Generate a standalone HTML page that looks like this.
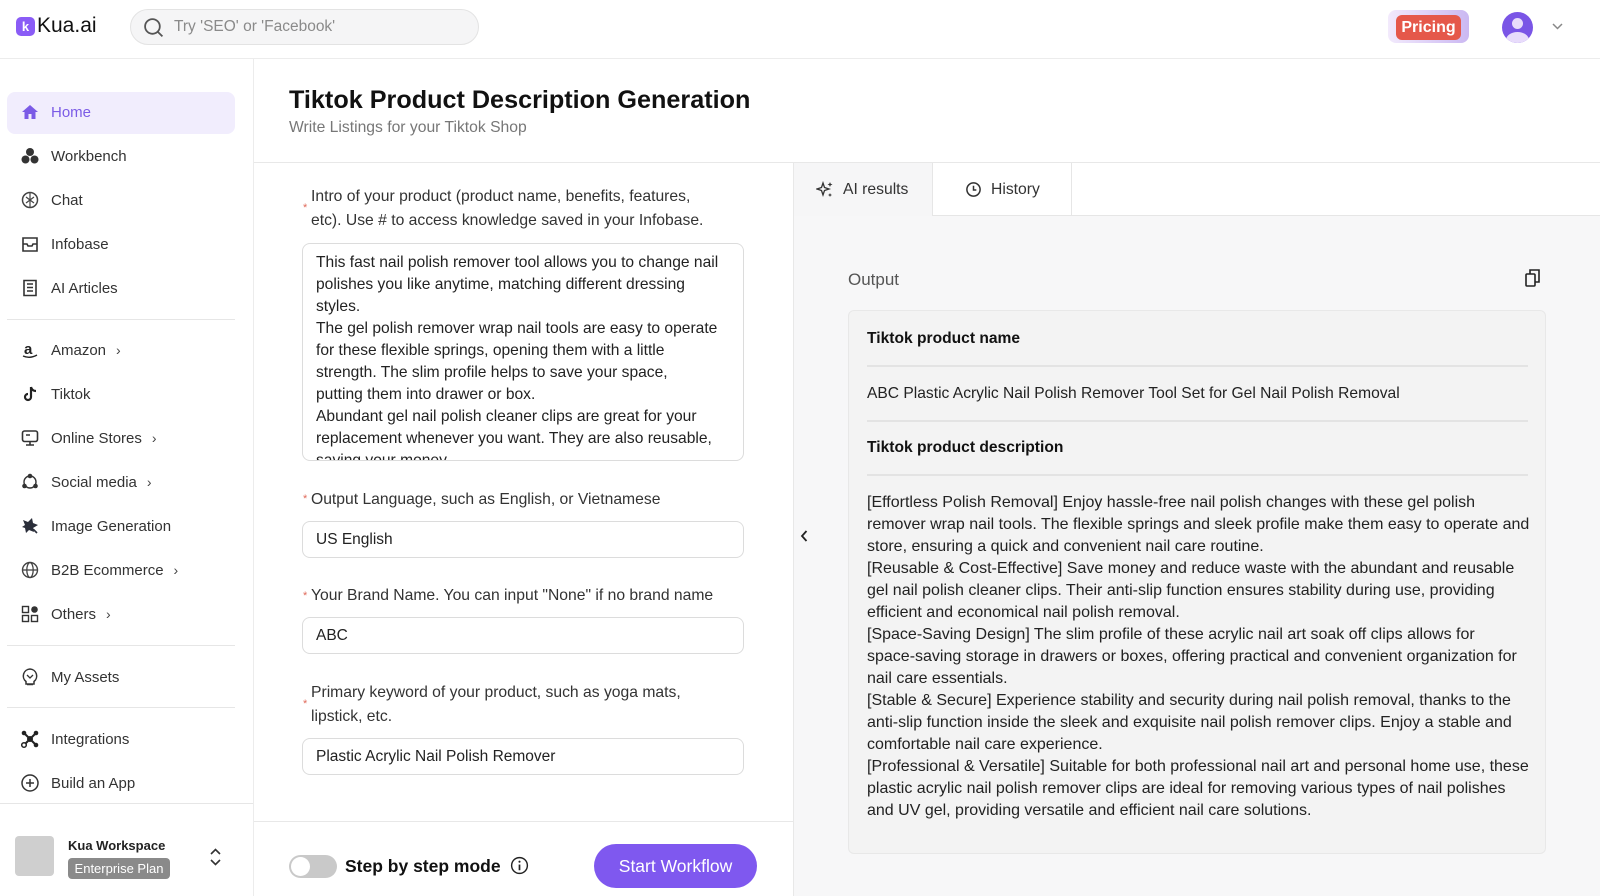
<!DOCTYPE html>
<html><head><meta charset="utf-8"><style>
*{box-sizing:border-box;margin:0;padding:0}
body{width:1600px;height:896px;overflow:hidden;font-family:"Liberation Sans",sans-serif;color:#1f1f1f;background:#fff;position:relative}
.a{position:absolute}
.nav{position:absolute;left:20px;height:22px;display:flex;align-items:center;font-size:15px;color:#333}
.nav svg{width:20px;height:20px;margin-right:11px}
.nav .ch{margin-left:10px;font-size:14px;color:#444}
.hr{position:absolute;left:7px;width:228px;height:1px;background:#e6e6e6}
.lbl{position:absolute;left:311px;font-size:15.7px;color:#333;line-height:24px;white-space:nowrap}
.star{position:absolute;color:#e06a5a;font-size:11px}
.inp{position:absolute;left:302px;width:442px;border:1px solid #dcdcdc;border-radius:8px;font-size:15.5px;color:#222;padding-left:13px;display:flex;align-items:center}
.out{font-size:15.6px;line-height:22px;color:#222;white-space:nowrap}
</style></head><body>
<!-- header -->
<div class="a" style="left:0;top:0;width:1600px;height:59px;border-bottom:1px solid #ececec"></div>
<div class="a" style="left:16px;top:17px;width:19px;height:19px;border-radius:5px;background:#8a5cf6;color:#fff;font-size:13px;font-weight:bold;text-align:center;line-height:19px">k</div>
<div class="a" style="left:37px;top:14px;font-size:21px;color:#111">Kua.ai</div>
<div class="a" style="left:130px;top:9px;width:349px;height:36px;border-radius:18px;background:#f5f5f6;border:1px solid #e3e3e3"></div>
<svg class="a" style="left:143px;top:17px" width="21" height="21" viewBox="0 0 20 20"><circle cx="9" cy="9" r="7" fill="none" stroke="#555" stroke-width="1.7"/><path d="M14 14l4.5 4.5" stroke="#555" stroke-width="1.7"/></svg>
<div class="a" style="left:174px;top:18px;font-size:15.5px;color:#8a8a8a">Try 'SEO' or 'Facebook'</div>
<div class="a" style="left:1388px;top:10px;width:81px;height:33px;border-radius:8px;background:linear-gradient(90deg,#f2eafc,#cbb8f2)"></div>
<div class="a" style="left:1396px;top:15px;width:65px;height:25px;border-radius:6px;background:#e5584a;color:#fff;font-size:16px;font-weight:bold;text-align:center;line-height:25px">Pricing</div>
<div class="a" style="left:1502px;top:12px;width:31px;height:31px;border-radius:50%;background:#7a55e6;overflow:hidden"><div class="a" style="left:10px;top:6px;width:11px;height:11px;border-radius:50%;background:#e8dcfb"></div><div class="a" style="left:4px;top:20px;width:23px;height:16px;border-radius:50%;background:#e8dcfb"></div></div>
<svg class="a" style="left:1551px;top:22px" width="13" height="9" viewBox="0 0 13 9"><path d="M2 2l4.5 4.5L11 2" fill="none" stroke="#888" stroke-width="1.5"/></svg>

<!-- sidebar -->
<div class="a" style="left:253px;top:59px;width:1px;height:837px;background:#ececec"></div>
<div class="a" style="left:7px;top:92px;width:228px;height:42px;border-radius:8px;background:#f1edfd"></div>
<div class="nav" style="top:101px;color:#7b5be6"><svg viewBox="0 0 20 20"><path d="M2 10L10 3l8 7h-2.5v7h-4v-5h-3v5h-4v-7z" fill="#7b5be6"/></svg>Home</div>
<div class="nav" style="top:145px"><svg viewBox="0 0 20 20"><circle cx="10" cy="6" r="4" fill="#333"/><circle cx="5.5" cy="13.5" r="4" fill="#333"/><circle cx="14.5" cy="13.5" r="4" fill="#333"/></svg>Workbench</div>
<div class="nav" style="top:189px"><svg viewBox="0 0 20 20"><circle cx="10" cy="10" r="7.5" fill="none" stroke="#444" stroke-width="1.5"/><path d="M6 7l8 6M6 13l8-6M10 3v14" stroke="#444" stroke-width="1.2"/></svg>Chat</div>
<div class="nav" style="top:233px"><svg viewBox="0 0 20 20"><path d="M3 4h14v13H3zM3 10h4l1 2h4l1-2h4" fill="none" stroke="#333" stroke-width="1.6"/></svg>Infobase</div>
<div class="nav" style="top:277px"><svg viewBox="0 0 20 20"><path d="M4 2.5h12v15H4zM7 6h6M7 9.5h6M7 13h6" fill="none" stroke="#333" stroke-width="1.6"/></svg>AI Articles</div>
<div class="hr" style="top:319px"></div>
<div class="nav" style="top:339px"><svg viewBox="0 0 20 20"><text x="4" y="14" font-size="15" font-weight="bold" font-family="Liberation Sans" fill="#222">a</text><path d="M3 16q7 3 14-1" fill="none" stroke="#222" stroke-width="1.3"/></svg>Amazon<span class="ch">›</span></div>
<div class="nav" style="top:383px"><svg viewBox="0 0 20 20"><path d="M11 3v10a3 3 0 1 1-3-3M11 3q1 4 5 4" fill="none" stroke="#222" stroke-width="2.2"/></svg>Tiktok</div>
<div class="nav" style="top:427px"><svg viewBox="0 0 20 20"><rect x="2.5" y="3" width="15" height="10.5" rx="2" fill="none" stroke="#333" stroke-width="1.6"/><path d="M10 14v3M6 17h8M6 7h4" stroke="#333" stroke-width="1.6"/></svg>Online Stores<span class="ch">›</span></div>
<div class="nav" style="top:471px"><svg viewBox="0 0 20 20"><circle cx="10" cy="10" r="6" fill="none" stroke="#333" stroke-width="1.4"/><circle cx="10" cy="4" r="2.3" fill="#333"/><circle cx="4.5" cy="14" r="2.3" fill="#333"/><circle cx="15.5" cy="14" r="2.3" fill="#333"/></svg>Social media<span class="ch">›</span></div>
<div class="nav" style="top:515px"><svg viewBox="0 0 20 20"><path d="M3 4l5 2 4-4 1 5 5 2-5 3 1 4-5-2-3 3-1-5-3-1 3-2z" fill="#2a2e3a"/><path d="M13 13l4 4" stroke="#2a2e3a" stroke-width="1.6"/></svg>Image Generation</div>
<div class="nav" style="top:559px"><svg viewBox="0 0 20 20"><circle cx="10" cy="10" r="7.5" fill="none" stroke="#444" stroke-width="1.4"/><ellipse cx="10" cy="10" rx="3.2" ry="7.5" fill="none" stroke="#444" stroke-width="1.3"/><path d="M2.5 10h15" stroke="#444" stroke-width="1.3"/></svg>B2B Ecommerce<span class="ch">›</span></div>
<div class="nav" style="top:603px"><svg viewBox="0 0 20 20"><rect x="2.5" y="2.5" width="6" height="6" fill="none" stroke="#333" stroke-width="1.4"/><circle cx="14.5" cy="5.5" r="3.3" fill="#333"/><rect x="2.5" y="11.5" width="6" height="6" fill="none" stroke="#333" stroke-width="1.4"/><rect x="11.5" y="11.5" width="6" height="6" fill="none" stroke="#333" stroke-width="1.4"/></svg>Others<span class="ch">›</span></div>
<div class="hr" style="top:645px"></div>
<div class="nav" style="top:666px"><svg viewBox="0 0 20 20"><path d="M10 2a7 7 0 0 1 4 12.5V17H6v-2.5A7 7 0 0 1 10 2zM7 17.5h6" fill="none" stroke="#333" stroke-width="1.5"/><path d="M7 8l3 3 3-3" fill="none" stroke="#333" stroke-width="1.3"/></svg>My Assets</div>
<div class="hr" style="top:707px"></div>
<div class="nav" style="top:728px"><svg viewBox="0 0 20 20"><path d="M4 4l12 12M16 4L4 16" stroke="#222" stroke-width="2"/><circle cx="10" cy="10" r="3" fill="#222"/><circle cx="4" cy="4" r="2.3" fill="#222"/><circle cx="16" cy="4" r="2.3" fill="#222"/><circle cx="4" cy="16" r="2.3" fill="#fff" stroke="#222" stroke-width="1.5"/><circle cx="16" cy="16" r="2.3" fill="#222"/></svg>Integrations</div>
<div class="nav" style="top:772px"><svg viewBox="0 0 20 20"><circle cx="10" cy="10" r="8" fill="none" stroke="#333" stroke-width="1.5"/><path d="M10 6v8M6 10h8" stroke="#333" stroke-width="1.5"/></svg>Build an App</div>
<div class="a" style="left:0;top:803px;width:253px;height:1px;background:#e6e6e6"></div>
<div class="a" style="left:15px;top:836px;width:39px;height:40px;border-radius:4px;background:#cfcfcf"></div>
<div class="a" style="left:68px;top:838px;font-size:13px;font-weight:bold;color:#222">Kua Workspace</div>
<div class="a" style="left:68px;top:858px;width:102px;height:21px;border-radius:4px;background:#8a8a8a;color:#fff;font-size:13px;text-align:center;line-height:21px">Enterprise Plan</div>
<svg class="a" style="left:209px;top:847px" width="13" height="20" viewBox="0 0 13 20"><path d="M2 7l4.5-4.5L11 7M2 13l4.5 4.5L11 13" fill="none" stroke="#333" stroke-width="1.6"/></svg>

<!-- title -->
<div class="a" style="left:289px;top:86px;font-size:25.2px;font-weight:bold;color:#111">Tiktok Product Description Generation</div>
<div class="a" style="left:289px;top:119px;font-size:15.7px;color:#777">Write Listings for your Tiktok Shop</div>
<div class="a" style="left:254px;top:162px;width:1346px;height:1px;background:#e8e8e8"></div>

<!-- form -->
<div class="a" style="left:793px;top:163px;width:1px;height:733px;background:#e8e8e8"></div>
<span class="star" style="left:303px;top:202px">*</span>
<div class="lbl" style="top:185px">Intro of your product (product name, benefits, features,<br>etc). Use # to access knowledge saved in your Infobase.</div>
<div class="a" style="left:302px;top:243px;width:442px;height:218px;border:1px solid #dcdcdc;border-radius:8px;overflow:hidden">
<div style="padding:8px 0 0 13px;font-size:15.6px;line-height:22px;color:#222;white-space:nowrap">This fast nail polish remover tool allows you to change nail<br>polishes you like anytime, matching different dressing<br>styles.<br>The gel polish remover wrap nail tools are easy to operate<br>for these flexible springs, opening them with a little<br>strength. The slim profile helps to save your space,<br>putting them into drawer or box.<br>Abundant gel nail polish cleaner clips are great for your<br>replacement whenever you want. They are also reusable,<br>saving your money.</div></div>
<span class="star" style="left:303px;top:493px">*</span>
<div class="lbl" style="top:488px">Output Language, such as English, or Vietnamese</div>
<div class="inp" style="top:521px;height:37px">US English</div>
<span class="star" style="left:303px;top:590px">*</span>
<div class="lbl" style="top:584px">Your Brand Name. You can input "None" if no brand name</div>
<div class="inp" style="top:617px;height:37px">ABC</div>
<span class="star" style="left:303px;top:698px">*</span>
<div class="lbl" style="top:681px">Primary keyword of your product, such as yoga mats,<br>lipstick, etc.</div>
<div class="inp" style="top:738px;height:37px">Plastic Acrylic Nail Polish Remover</div>
<div class="a" style="left:254px;top:821px;width:539px;height:1px;background:#e8e8e8"></div>
<div class="a" style="left:289px;top:855px;width:48px;height:23px;border-radius:12px;background:#c9c9c9"><div class="a" style="left:2px;top:2px;width:19px;height:19px;border-radius:50%;background:#fff"></div></div>
<div class="a" style="left:345px;top:856px;font-size:17.5px;font-weight:bold;color:#111">Step by step mode</div>
<svg class="a" style="left:510px;top:856px" width="19" height="19" viewBox="0 0 20 20"><circle cx="10" cy="10" r="8.3" fill="none" stroke="#222" stroke-width="1.5"/><path d="M10 9v6" stroke="#222" stroke-width="1.8"/><circle cx="10" cy="6" r="1.1" fill="#222"/></svg>
<div class="a" style="left:594px;top:844px;width:163px;height:44px;border-radius:22px;background:#7f58ef;color:#fff;font-size:17.5px;text-align:center;line-height:44px">Start Workflow</div>

<!-- right panel -->
<div class="a" style="left:794px;top:163px;width:806px;height:733px;background:#f7f7f8"></div>
<div class="a" style="left:794px;top:163px;width:806px;height:53px;background:#fff;border-bottom:1px solid #e6e6e6"></div>
<div class="a" style="left:794px;top:163px;width:139px;height:53px;background:#f6f6f7;border-right:1px solid #e6e6e6"></div>
<div class="a" style="left:933px;top:163px;width:139px;height:53px;border-right:1px solid #e6e6e6"></div>
<svg class="a" style="left:816px;top:181px" width="18" height="18" viewBox="0 0 18 18"><path d="M7 2l1.5 4.5L13 8l-4.5 1.5L7 14l-1.5-4.5L1 8l4.5-1.5z" fill="none" stroke="#333" stroke-width="1.3"/><path d="M14 1l.7 1.8 1.8.7-1.8.7L14 6l-.7-1.8-1.8-.7 1.8-.7zM14 12l.6 1.4 1.4.6-1.4.6L14 16l-.6-1.4-1.4-.6 1.4-.6z" fill="#333"/></svg>
<div class="a" style="left:843px;top:181px;font-size:15.7px;color:#333">AI results</div>
<svg class="a" style="left:965px;top:181px" width="17" height="17" viewBox="0 0 18 18"><circle cx="9" cy="9" r="7" fill="none" stroke="#333" stroke-width="1.6"/><path d="M9 5v4.5h3" fill="none" stroke="#333" stroke-width="1.6"/></svg>
<div class="a" style="left:991px;top:181px;font-size:15.7px;color:#333">History</div>
<div class="a" style="left:848px;top:270px;font-size:17px;color:#555">Output</div>
<svg class="a" style="left:1524px;top:268px" width="18" height="20" viewBox="0 0 18 20"><rect x="2" y="6" width="9" height="12" rx="1" fill="none" stroke="#222" stroke-width="1.6"/><path d="M6 6V2h9v12h-4" fill="none" stroke="#222" stroke-width="1.6"/></svg>
<div class="a" style="left:848px;top:310px;width:698px;height:544px;background:#f3f3f3;border:1px solid #e8e8e8;border-radius:6px"></div>
<div class="a" style="left:867px;top:330px;font-size:15.6px;font-weight:bold;color:#111">Tiktok product name</div>
<div class="a" style="left:867px;top:365px;width:661px;height:2px;background:#e3e3e3"></div>
<div class="a out" style="left:867px;top:383px">ABC Plastic Acrylic Nail Polish Remover Tool Set for Gel Nail Polish Removal</div>
<div class="a" style="left:867px;top:420px;width:661px;height:2px;background:#e3e3e3"></div>
<div class="a" style="left:867px;top:439px;font-size:15.6px;font-weight:bold;color:#111">Tiktok product description</div>
<div class="a" style="left:867px;top:474px;width:661px;height:2px;background:#e3e3e3"></div>
<div class="a out" style="left:867px;top:492px;font-size:16px">[Effortless Polish Removal] Enjoy hassle-free nail polish changes with these gel polish<br>remover wrap nail tools. The flexible springs and sleek profile make them easy to operate and<br>store, ensuring a quick and convenient nail care routine.<br>[Reusable &amp; Cost-Effective] Save money and reduce waste with the abundant and reusable<br>gel nail polish cleaner clips. Their anti-slip function ensures stability during use, providing<br>efficient and economical nail polish removal.<br>[Space-Saving Design] The slim profile of these acrylic nail art soak off clips allows for<br>space-saving storage in drawers or boxes, offering practical and convenient organization for<br>nail care essentials.<br>[Stable &amp; Secure] Experience stability and security during nail polish removal, thanks to the<br>anti-slip function inside the sleek and exquisite nail polish remover clips. Enjoy a stable and<br>comfortable nail care experience.<br>[Professional &amp; Versatile] Suitable for both professional nail art and personal home use, these<br>plastic acrylic nail polish remover clips are ideal for removing various types of nail polishes<br>and UV gel, providing versatile and efficient nail care solutions.</div>
<svg class="a" style="left:799px;top:529px" width="10" height="14" viewBox="0 0 10 14"><path d="M7.5 2L3 7l4.5 5" fill="none" stroke="#222" stroke-width="1.8"/></svg>
</body></html>
